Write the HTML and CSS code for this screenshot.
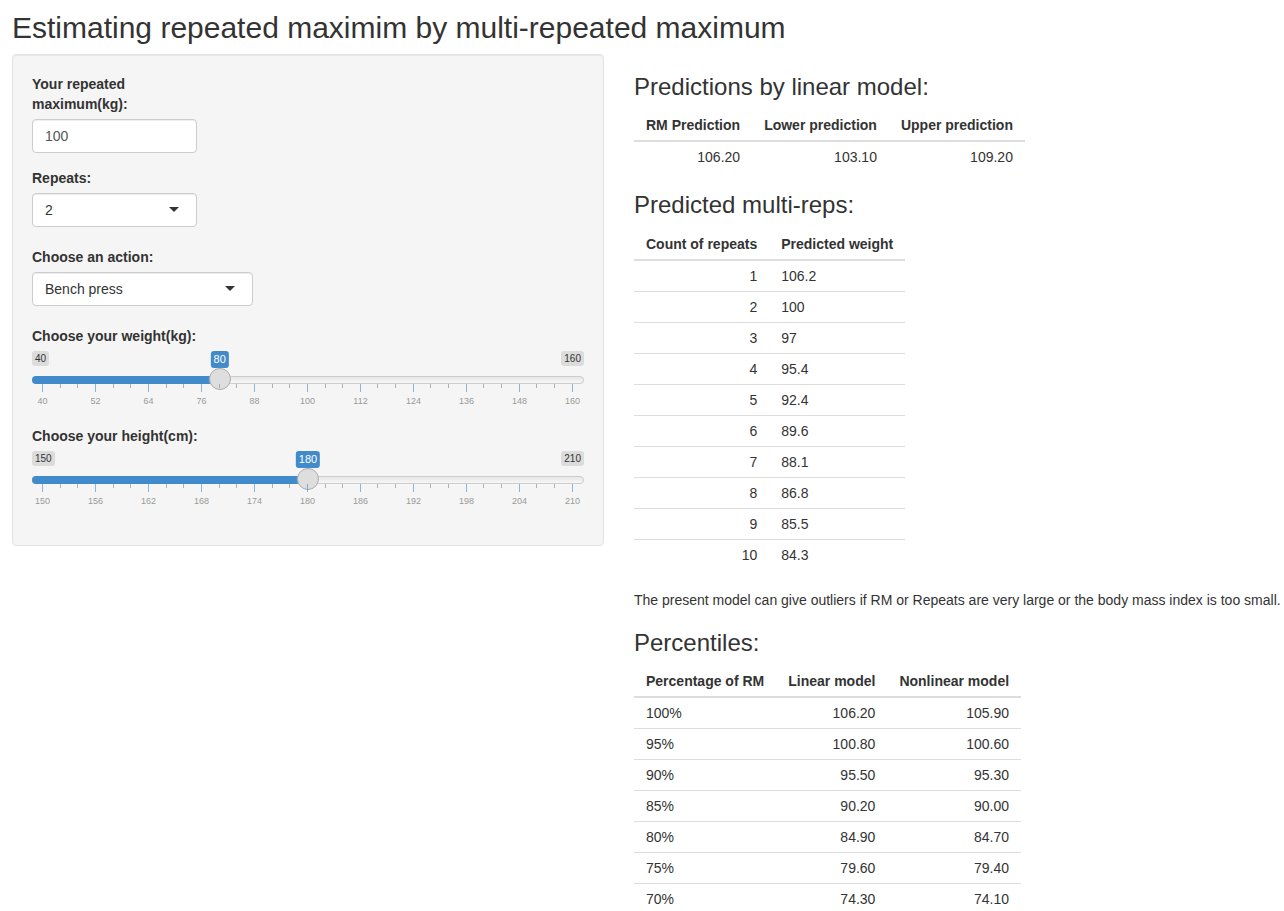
FILE: index.html
```html
<!DOCTYPE html>
<html>
<head>
<meta charset="utf-8">
<title>Estimating repeated maximim by multi-repeated maximum</title>
<link rel="stylesheet" href="styles.css">
</head>
<body>
<div class="page">
  <h2 class="title">Estimating repeated maximim by multi-repeated maximum</h2>
  <div class="layout">
    <div class="sidebar">
      <form class="well">
        <div class="form-group w-narrow">
          <label class="control-label">Your repeated maximum(kg):</label>
          <div class="form-control input-box">100</div>
        </div>
        <div class="form-group has-select w-narrow">
          <label class="control-label">Repeats:</label>
          <div class="form-control select-box"><span class="select-text">2</span><span class="caret"></span></div>
        </div>
        <div class="form-group has-select w-wide">
          <label class="control-label">Choose an action:</label>
          <div class="form-control select-box"><span class="select-text">Bench press</span><span class="caret"></span></div>
        </div>
        <div class="form-group">
          <label class="control-label">Choose your weight(kg):</label>
          <div class="irs" style="--p:0.33333">
            <span class="irs-line"></span>
            <span class="irs-bar"></span>
            <span class="irs-min">40</span>
            <span class="irs-max">160</span>
            <span class="irs-single">80</span>
            <span class="irs-handle"></span>
            <div class="irs-grid">
              <div class="ticks">
                <i class="big"></i><i></i><i></i><i class="big"></i><i></i><i></i><i class="big"></i><i></i><i></i><i class="big"></i><i></i><i></i><i class="big"></i><i></i><i></i><i class="big"></i><i></i><i></i><i class="big"></i><i></i><i></i><i class="big"></i><i></i><i></i><i class="big"></i><i></i><i></i><i class="big"></i><i></i><i></i><i class="big"></i>
              </div>
              <div class="grid-labels">
                <span>40</span><span>52</span><span>64</span><span>76</span><span>88</span><span>100</span><span>112</span><span>124</span><span>136</span><span>148</span><span>160</span>
              </div>
            </div>
          </div>
        </div>
        <div class="form-group">
          <label class="control-label">Choose your height(cm):</label>
          <div class="irs" style="--p:0.5">
            <span class="irs-line"></span>
            <span class="irs-bar"></span>
            <span class="irs-min">150</span>
            <span class="irs-max">210</span>
            <span class="irs-single">180</span>
            <span class="irs-handle"></span>
            <div class="irs-grid">
              <div class="ticks">
                <i class="big"></i><i></i><i></i><i class="big"></i><i></i><i></i><i class="big"></i><i></i><i></i><i class="big"></i><i></i><i></i><i class="big"></i><i></i><i></i><i class="big"></i><i></i><i></i><i class="big"></i><i></i><i></i><i class="big"></i><i></i><i></i><i class="big"></i><i></i><i></i><i class="big"></i><i></i><i></i><i class="big"></i>
              </div>
              <div class="grid-labels">
                <span>150</span><span>156</span><span>162</span><span>168</span><span>174</span><span>180</span><span>186</span><span>192</span><span>198</span><span>204</span><span>210</span>
              </div>
            </div>
          </div>
        </div>
      </form>
    </div>
    <div class="main">
      <h3>Predictions by linear model:</h3>
      <table class="tbl">
        <thead>
          <tr><th class="r">RM Prediction</th><th class="r">Lower prediction</th><th class="r">Upper prediction</th></tr>
        </thead>
        <tbody>
          <tr><td class="r">106.20</td><td class="r">103.10</td><td class="r">109.20</td></tr>
        </tbody>
      </table>
      <h3>Predicted multi-reps:</h3>
      <table class="tbl">
        <thead>
          <tr><th class="r">Count of repeats</th><th>Predicted weight</th></tr>
        </thead>
        <tbody>
          <tr><td class="r">1</td><td>106.2</td></tr>
          <tr><td class="r">2</td><td>100</td></tr>
          <tr><td class="r">3</td><td>97</td></tr>
          <tr><td class="r">4</td><td>95.4</td></tr>
          <tr><td class="r">5</td><td>92.4</td></tr>
          <tr><td class="r">6</td><td>89.6</td></tr>
          <tr><td class="r">7</td><td>88.1</td></tr>
          <tr><td class="r">8</td><td>86.8</td></tr>
          <tr><td class="r">9</td><td>85.5</td></tr>
          <tr><td class="r">10</td><td>84.3</td></tr>
        </tbody>
      </table>
      <p class="note">The present model can give outliers if RM or Repeats are very large or the body mass index is too small.</p>
      <h3>Percentiles:</h3>
      <table class="tbl">
        <thead>
          <tr><th>Percentage of RM</th><th class="r">Linear model</th><th class="r">Nonlinear model</th></tr>
        </thead>
        <tbody>
          <tr><td>100%</td><td class="r">106.20</td><td class="r">105.90</td></tr>
          <tr><td>95%</td><td class="r">100.80</td><td class="r">100.60</td></tr>
          <tr><td>90%</td><td class="r">95.50</td><td class="r">95.30</td></tr>
          <tr><td>85%</td><td class="r">90.20</td><td class="r">90.00</td></tr>
          <tr><td>80%</td><td class="r">84.90</td><td class="r">84.70</td></tr>
          <tr><td>75%</td><td class="r">79.60</td><td class="r">79.40</td></tr>
          <tr><td>70%</td><td class="r">74.30</td><td class="r">74.10</td></tr>
        </tbody>
      </table>
    </div>
  </div>
</div>
</body>
</html>
```

FILE: styles.css
```css
html, body {
  margin: 0;
  padding: 0;
  overflow: hidden;
  background: #fff;
}

body {
  font-family: "Liberation Sans", Arial, Helvetica, sans-serif;
  font-size: 14px;
  line-height: 1.42857143;
  color: #333;
}

.page {
  padding: 0 12px;
}

.title {
  font-size: 30px;
  font-weight: 500;
  line-height: 1.1;
  margin: 11px 0 10px;
  white-space: nowrap;
}

.layout {
  display: flex;
  align-items: flex-start;
  gap: 30px;
}

.sidebar {
  flex: none;
  width: 592px;
}

.well {
  box-sizing: border-box;
  padding: 19px;
  margin: 0 0 20px;
  background: #f5f5f5;
  border: 1px solid #e3e3e3;
  border-radius: 4px;
  box-shadow: inset 0 1px 1px rgba(0, 0, 0, 0.05);
}

.form-group {
  margin-bottom: 15px;
}

.form-group.has-select {
  margin-bottom: 20px;
}

.w-narrow {
  width: 165px;
}

.w-wide {
  width: 221px;
}

.control-label {
  display: inline-block;
  max-width: 100%;
  margin-bottom: 5px;
  font-weight: 700;
}

.form-control {
  box-sizing: border-box;
  height: 34px;
  width: 100%;
  padding: 6px 12px;
  font-size: 14px;
  line-height: 20px;
  background: #fff;
  border: 1px solid #ccc;
  border-radius: 4px;
  box-shadow: inset 0 1px 1px rgba(0, 0, 0, 0.075);
}

.input-box {
  color: #555;
}

.select-box {
  display: flex;
  align-items: center;
  justify-content: space-between;
  padding-right: 17px;
  color: #333;
}

.caret {
  width: 0;
  height: 0;
  border-style: solid;
  border-width: 5px 5px 0 5px;
  border-color: #333 transparent transparent transparent;
  margin-top: -1px;
}

/* ion range slider, shiny skin */
.irs {
  position: relative;
  height: 60px;
  font-family: "Liberation Sans", Arial, Helvetica, sans-serif;
}

.irs-line {
  position: absolute;
  top: 25px;
  left: 0;
  right: 0;
  height: 8px;
  box-sizing: border-box;
  border: 1px solid #ccc;
  border-radius: 8px;
  background: linear-gradient(to bottom, #dedede -50%, #fff 150%);
  background-color: #ededed;
}

.irs-bar {
  position: absolute;
  top: 25px;
  left: 0;
  height: 8px;
  width: calc(11px + var(--p) * (100% - 22px));
  background: #428bca;
  border-radius: 8px 0 0 8px;
}

.irs-min,
.irs-max {
  position: absolute;
  top: 0;
  padding: 1px 3px;
  font-size: 10px;
  line-height: 1.333;
  color: #333;
  background: rgba(0, 0, 0, 0.1);
  border-radius: 3px;
}

.irs-min {
  left: 0;
}

.irs-max {
  right: 0;
}

.irs-single {
  position: absolute;
  top: 0;
  left: calc(11px + var(--p) * (100% - 22px));
  transform: translateX(-50%);
  padding: 1px 3px;
  font-size: 11px;
  line-height: 1.333;
  color: #fff;
  background: #428bca;
  border-radius: 3px;
}

.irs-handle {
  position: absolute;
  top: 17px;
  left: calc(var(--p) * (100% - 22px));
  width: 22px;
  height: 22px;
  box-sizing: border-box;
  border: 1px solid #ababab;
  border-radius: 22px;
  background: #dedede;
  box-shadow: 1px 1px 3px rgba(255, 255, 255, 0.3);
}

.irs-grid {
  position: absolute;
  top: 33px;
  left: 10px;
  width: calc(100% - 21px);
  height: 27px;
}

.ticks {
  display: flex;
  justify-content: space-between;
  align-items: flex-start;
  height: 8px;
}

.ticks i {
  display: block;
  width: 1px;
  height: 4px;
  background: #999;
  opacity: 0.75;
}

.ticks i.big {
  height: 8px;
  background: #428bca;
  opacity: 0.6;
}

.grid-labels {
  display: flex;
  justify-content: space-between;
  margin-top: 5px;
}

.grid-labels span {
  display: flex;
  justify-content: center;
  width: 1px;
  font-size: 9px;
  line-height: 9px;
  color: #999;
  white-space: nowrap;
}

/* main panel */
.main {
  flex: 1;
  min-width: 0;
}

.main h3 {
  font-size: 24px;
  font-weight: 500;
  line-height: 1.1;
  margin: 20px 0 10px;
}

.tbl {
  border-collapse: collapse;
  border-spacing: 0;
  margin-bottom: 20px;
}

.tbl th,
.tbl td {
  padding: 5px 12px;
  line-height: 20px;
  text-align: left;
}

.tbl th {
  font-weight: 700;
  vertical-align: bottom;
  border-bottom: 2px solid #ddd;
}

.tbl td {
  vertical-align: top;
  border-top: 1px solid #ddd;
}

.tbl .r {
  text-align: right;
}

.note {
  margin: 0 0 10px;
  white-space: nowrap;
}
```
